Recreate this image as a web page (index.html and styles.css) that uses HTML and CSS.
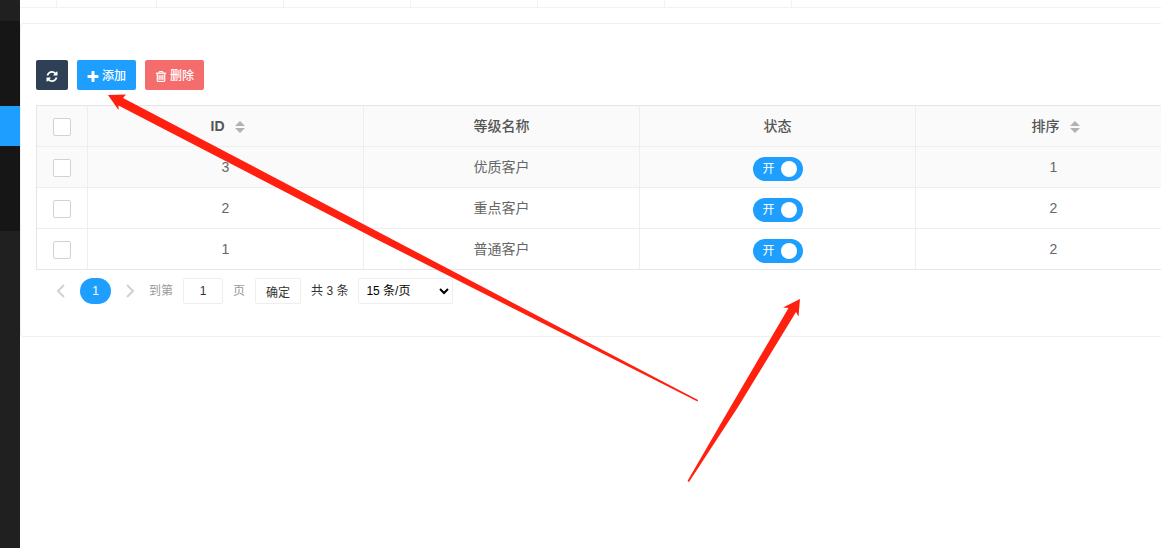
FILE: index.html
```html
<!DOCTYPE html>
<html lang="zh-CN">
<head>
    <meta charset="UTF-8">
    <meta name="viewport" content="width=device-width, initial-scale=1.0">
    <title>客户等级</title>
    <link rel="stylesheet" href="styles.css">
</head>
<body>

    <nav class="side">
        <div class="side-head"></div>
        <div class="side-group">
            <div class="side-item"></div>
            <div class="side-item"></div>
            <div class="side-item active"></div>
            <div class="side-item"></div>
            <div class="side-item"></div>
        </div>
    </nav>

    <main class="main">
        <div class="tabs">
            <div class="tab tab-small"></div>
            <div class="tab tab-home"></div>
            <div class="tab"></div>
            <div class="tab"></div>
            <div class="tab"></div>
            <div class="tab"></div>
            <div class="tab"></div>
        </div>

        <section class="panel">
            <div class="toolbar">
                <button class="btn btn-dark" type="button" aria-label="刷新">
                    <svg class="icon" viewBox="0 0 1536 1536"><path d="M1511 928q0 5-1 7-64 268-268 434.500T764 1536q-146 0-282.500-55T238 1324l-129 129q-19 19-45 19t-45-19-19-45V960q0-26 19-45t45-19h448q26 0 45 19t19 45-19 45l-137 137q71 66 161 102t187 36q134 0 250-65t186-179q11-17 53-117 8-23 30-23h192q13 0 22.500 9.500t9.500 22.500zm25-800v448q0 26-19 45t-45 19h-448q-26 0-45-19t-19-45 19-45l138-138Q969 256 768 256q-134 0-250 65T332 500q-11 17-53 117-8 23-30 23H50q-13 0-22.500-9.500T18 608v-7q65-268 270-434.500T768 0q146 0 284 55.500T1297 212l130-129q19-19 45-19t45 19 19 45z"/></svg>
                </button>
                <button class="btn btn-blue" type="button">
                    <svg class="icon" viewBox="0 0 1408 1408"><path d="M1408 608v192q0 40-28 68t-68 28H896v416q0 40-28 68t-68 28H608q-40 0-68-28t-28-68V896H96q-40 0-68-28T0 800V608q0-40 28-68t68-28h416V96q0-40 28-68t68-28h192q40 0 68 28t28 68v416h416q40 0 68 28t28 68z"/></svg>
                    添加
                </button>
                <button class="btn btn-red" type="button">
                    <svg class="icon icon-trash" viewBox="0 0 1408 1536"><path d="M512 608v576q0 14-9 23t-23 9h-64q-14 0-23-9t-9-23V608q0-14 9-23t23-9h64q14 0 23 9t9 23zm256 0v576q0 14-9 23t-23 9h-64q-14 0-23-9t-9-23V608q0-14 9-23t23-9h64q14 0 23 9t9 23zm256 0v576q0 14-9 23t-23 9h-64q-14 0-23-9t-9-23V608q0-14 9-23t23-9h64q14 0 23 9t9 23zm128 724V384H256v948q0 22 7 40.500t14.500 27 10.500 8.500h832q3 0 10.500-8.500t14.500-27 7-40.500zM480 256h448l-48-117q-7-9-17-11H546q-10 2-17 11zm928 32v64q0 14-9 23t-23 9h-96v948q0 83-47 143.500t-113 60.500H288q-66 0-113-58.500T128 1336V384H32q-14 0-23-9t-9-23v-64q0-14 9-23t23-9h309l70-167q15-37 54-63t79-26h320q40 0 79 26t54 63l70 167h309q14 0 23 9t9 23z"/></svg>
                    删除
                </button>
            </div>

            <table class="grid">
                <colgroup>
                    <col class="col-check">
                    <col class="col-data">
                    <col class="col-data">
                    <col class="col-data">
                    <col class="col-data">
                </colgroup>
                <thead>
                    <tr>
                        <th><input class="check" type="checkbox" aria-label="全选"></th>
                        <th><span class="sortable"><b>ID</b> <span class="sort"></span></span></th>
                        <th>等级名称</th>
                        <th>状态</th>
                        <th><span class="sortable">排序 <span class="sort"></span></span></th>
                    </tr>
                </thead>
                <tbody>
                    <tr class="hover">
                        <td><input class="check" type="checkbox" aria-label="选择 3"></td>
                        <td>3</td>
                        <td>优质客户</td>
                        <td><label class="switch"><input type="checkbox" checked><span>开</span></label></td>
                        <td>1</td>
                    </tr>
                    <tr>
                        <td><input class="check" type="checkbox" aria-label="选择 2"></td>
                        <td>2</td>
                        <td>重点客户</td>
                        <td><label class="switch"><input type="checkbox" checked><span>开</span></label></td>
                        <td>2</td>
                    </tr>
                    <tr>
                        <td><input class="check" type="checkbox" aria-label="选择 1"></td>
                        <td>1</td>
                        <td>普通客户</td>
                        <td><label class="switch"><input type="checkbox" checked><span>开</span></label></td>
                        <td>2</td>
                    </tr>
                </tbody>
            </table>

            <div class="pager">
                <a class="arrow" href="#" aria-label="上一页"><svg viewBox="0 0 8 14"><path d="M7 1L1 7l6 6"/></svg></a>
                <a class="current" href="#">1</a>
                <a class="arrow" href="#" aria-label="下一页"><svg viewBox="0 0 8 14"><path d="M1 1l6 6-6 6"/></svg></a>
                <label class="muted" for="page">到第</label>
                <input class="page" id="page" type="text" value="1">
                <span class="muted">页</span>
                <button class="go" type="button">确定</button>
                <span>共 3 条</span>
                <select class="limit" aria-label="每页条数">
                    <option>15 条/页</option>
                    <option>30 条/页</option>
                </select>
            </div>
        </section>
    </main>

    <!-- red pointer arrows over the page -->
    <svg class="marks" width="1161" height="548" viewBox="0 0 1161 548">
        <path d="M108 95L126 94.500L123 98L384 235L698 400L697.500 401.500L376 239L118.500 105.500L118.500 110z"/>
        <path d="M800 299L783 307.500L788.500 308L731 406L687.500 481L689 482L738 407L796 312L798.500 316.500z"/>
    </svg>

</body>
</html>
```

FILE: styles.css
```css
:root {
    --blue: #1e9fff;
    --dark: #2f4056;
    --red: #f56c6c;
    --line: #eee;
    --line-outer: #e6e6e6;
}

* {
    box-sizing: border-box;
}

body {
    margin: 0;
    min-height: 100vh;
    display: flex;
    position: relative;
    overflow: hidden;
    background: #fff;
    color: #333;
    font: 14px/24px "Liberation Sans", "Noto Sans CJK SC", sans-serif;
}

.side {
    flex: 0 0 20px;
    background: #202020;
}

.side-head {
    height: 21px;
}

.side-group {
    background: #161616;
    padding: 5px 0;
}

.side-item {
    height: 40px;
}

.side-item.active {
    background: var(--blue);
}

.main {
    flex: 1;
    min-width: 0;
    overflow: hidden;
}

.tabs {
    display: flex;
    height: 8px;
    margin-bottom: 15px;
    border-bottom: 1px solid #f2f2f2;
}

.tab {
    width: 127px;
    border-right: 1px solid #f2f2f2;
}

.tab-small {
    width: 37px;
}

.tab-home {
    width: 100px;
}

.panel {
    padding: 36px 15px 32px;
    border: 1px solid #f0f0f0;
    border-right: 0;
    border-radius: 4px 0 0 4px;
}

.toolbar {
    display: flex;
    gap: 9px;
    margin-bottom: 15px;
}

.btn {
    display: flex;
    align-items: center;
    justify-content: center;
    gap: 3px;
    height: 30px;
    padding: 2px 10px 0;
    border: 0;
    border-radius: 2px;
    color: #fff;
    font: 500 12px/28px "Liberation Sans", "Noto Sans CJK SC", sans-serif;
    cursor: pointer;
}

.btn-dark {
    background: var(--dark);
}

.btn-blue {
    background: var(--blue);
}

.btn-red {
    background: var(--red);
}

.icon {
    width: 12px;
    height: 11px;
    fill: currentColor;
}

.icon-trash {
    stroke: currentColor;
    stroke-width: 50;
}

.grid {
    width: 1156px;
    table-layout: fixed;
    border-collapse: separate;
    border-spacing: 0;
    border: 1px solid var(--line-outer);
    border-bottom: 0;
    color: #666;
}

.col-check {
    width: 51px;
}

.col-data {
    width: 276px;
}

.grid th,
.grid td {
    height: 41px;
    padding: 0;
    text-align: center;
    vertical-align: middle;
    border-right: 1px solid var(--line);
    border-bottom: 1px solid var(--line);
}

.grid th {
    background: #fafafa;
    color: #555;
    font-weight: 500;
}

.grid .hover td {
    background: #fafafa;
}

.grid tr:last-child td {
    border-bottom-color: var(--line-outer);
}

.sortable {
    display: inline-flex;
    align-items: center;
    gap: 10px;
    padding-left: 4px;
}

.sort {
    display: grid;
    gap: 2px;
    padding-top: 2px;
}

.sort::before,
.sort::after {
    content: "";
    border: 5px solid transparent;
}

.sort::before {
    border-top: 0;
    border-bottom-color: #b2b2b2;
}

.sort::after {
    border-bottom: 0;
    border-top-color: #b2b2b2;
}

.check {
    appearance: none;
    display: block;
    width: 18px;
    height: 18px;
    margin: 2px auto 0;
    border: 1px solid #d2d2d2;
    border-radius: 2px;
    background: #fff;
}

.switch {
    display: flex;
    align-items: center;
    justify-content: space-between;
    width: 50px;
    height: 24px;
    margin: 4px auto 0;
    padding: 0 6px 0 10px;
    border-radius: 20px;
    background: var(--blue);
    color: #fff;
    font-size: 12px;
    cursor: pointer;
}

.switch input {
    appearance: none;
    order: 1;
    width: 16px;
    height: 16px;
    margin: 0;
    border-radius: 50%;
    background: #fff;
}

.pager {
    display: flex;
    align-items: center;
    gap: 10px;
    padding: 8px 16px 0;
    font-size: 12px;
    line-height: 26px;
}

.pager a {
    text-decoration: none;
}

.arrow {
    display: flex;
    justify-content: center;
    width: 18px;
}

.arrow svg {
    width: 8px;
    height: 14px;
    fill: none;
    stroke: #d2d2d2;
    stroke-width: 2;
}

.current {
    width: 31px;
    border-radius: 13px;
    background: var(--blue);
    color: #fff;
    text-align: center;
}

.muted {
    color: #999;
}

.page,
.go,
.limit {
    height: 26px;
    border: 1px solid var(--line);
    border-radius: 2px;
    background: #fff;
    color: #333;
    font: 12px "Liberation Sans", "Noto Sans CJK SC", sans-serif;
}

.page {
    width: 40px;
    padding: 0;
    text-align: center;
}

.go {
    padding: 0 10px;
}

.limit {
    width: 95px;
    padding: 0 3px;
    color: #000;
}

.marks {
    position: absolute;
    top: 0;
    left: 0;
    fill: #ff2010;
    pointer-events: none;
}
```
